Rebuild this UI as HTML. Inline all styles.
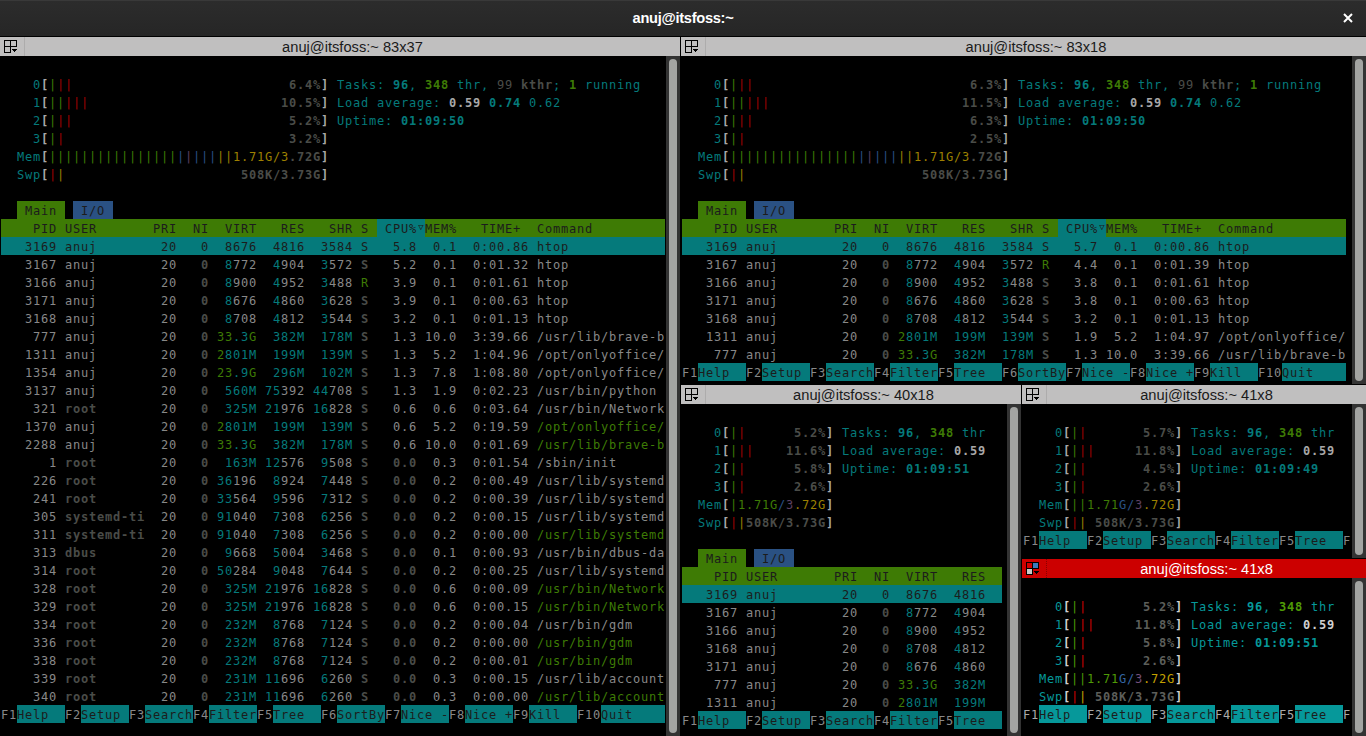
<!DOCTYPE html>
<html lang="en"><head><meta charset="utf-8"><title>anuj@itsfoss:~</title>
<style>
*{margin:0;padding:0;box-sizing:border-box}
html,body{width:1366px;height:736px;overflow:hidden;background:#000}
body{position:relative;font-family:"Liberation Sans","DejaVu Sans",sans-serif}
#tb{position:absolute;left:0;top:0;width:1366px;height:36px;background:linear-gradient(#2c2c2c,#262626);border-top:1px solid #393939}
#tb .t{position:absolute;left:0;width:1366px;top:0;line-height:35px;text-align:center;color:#fff;font-weight:bold;font-size:14.67px;letter-spacing:-0.3px}
#tb svg{position:absolute;left:1343px;top:12px}
.pane{position:absolute;overflow:hidden;background:#000}
.pt{position:absolute;left:0;top:0;right:0;height:19px;background:#c0bfbf;color:#1a1a1a;font-size:14.67px;line-height:20px;text-align:center;overflow:hidden}
.pt .ic{position:absolute;left:4px;top:3px}
.pt .sep{position:absolute;left:24px;top:0;width:1px;height:19px;background:#adacac}
.ptt{position:absolute;left:25px;right:0;top:0;height:19px;text-align:center;white-space:nowrap}
.act .pt{background:#cc0000;color:#fff}
.act .pt .sep{background:transparent;border-left:1px dotted #8a0000}
.term{position:absolute;left:1px;top:20px;right:0;font-family:"DejaVu Sans Mono","Liberation Mono",monospace;font-size:12px;color:var(--fg);
 --fg:#888888;--cy:#057a7b;--gr:#3e7b05;--rd:#a30000;--yl:#9d8000;--bl:#2a5183;--mg:#5e4062;--sh:#4a4c48;--bw:#a8a8a8}
.act .term{--fg:#aaaaaa;--cy:#06989a;--gr:#4e9a06;--rd:#cc0000;--yl:#c4a000;--bl:#3465a4;--mg:#75507b;--sh:#5c5e5a;--bw:#d0d0d0}
.r{position:absolute;left:0;height:18px;line-height:18px;white-space:pre;letter-spacing:calc(8px - 1ch)}
.r span{position:absolute;top:0;height:18px;line-height:20px}
.fg{color:var(--fg)}.cy{color:var(--cy)}.gr{color:var(--gr)}.rd{color:var(--rd)}.yl{color:var(--yl)}.bl{color:var(--bl)}.mg{color:var(--mg)}
.sh{color:var(--sh);font-weight:bold}.nb{font-weight:normal}.r span.tri{font-size:9px;letter-spacing:0;text-align:center;line-height:17px}.bw{color:var(--bw);font-weight:bold}.b{font-weight:bold}.k{color:#1c1c1c}
.bgr{background:var(--gr)}.bcy{background:var(--cy)}.bbl{background:var(--bl)}
.trough{position:absolute;top:19px;width:14px;background:#333333}
.thumb{position:absolute;left:3px;top:3px;bottom:3px;width:8px;border-radius:4px;background:#a3a4a2}
</style></head>
<body>
<div id="tb"><div class="t">anuj@itsfoss:~</div><svg width="10" height="10" viewBox="0 0 10 10"><path d="M1 1l8 8M9 1l-8 8" stroke="#fff" stroke-width="2" fill="none"/></svg></div>
<div class="pane" style="left:0px;top:37px;width:680px;height:699px"><div class="pt"><svg class="ic" width="13" height="13" viewBox="0 0 13 13" shape-rendering="crispEdges"><path d="M.5.5h12v6h-6v6h-6zM6.5.5v6M.5 6.5h6" fill="none" stroke="#000"/><path d="M8 9h5v1h-1v1h-1v1h-1v-1h-1v-1h-1z" fill="#000"/></svg><i class="sep"></i><span class="ptt">anuj@itsfoss:~ 83x37</span></div><div class="term" style="height:680px">
<div class="r" style="top:18px"><span class="cy" style="left:32px">0</span><span class="bw" style="left:40px">[</span><span class="gr" style="left:48px">|</span><span class="rd" style="left:56px">||</span><span class="sh" style="left:288px">6.4%</span><span class="bw" style="left:320px">]</span><span class="cy" style="left:336px">Tasks:</span><span class="cy b" style="left:392px">96</span><span class="cy" style="left:408px">,</span><span class="gr b" style="left:424px">348</span><span class="cy" style="left:456px">thr,</span><span class="sh nb" style="left:496px">99</span><span class="sh" style="left:520px">kthr</span><span class="cy" style="left:552px">;</span><span class="gr b" style="left:568px">1</span><span class="cy" style="left:584px">running</span></div>
<div class="r" style="top:36px"><span class="cy" style="left:32px">1</span><span class="bw" style="left:40px">[</span><span class="gr" style="left:48px">||</span><span class="rd" style="left:64px">|||</span><span class="sh" style="left:280px">10.5%</span><span class="bw" style="left:320px">]</span><span class="cy" style="left:336px">Load average:</span><span class="bw" style="left:448px">0.59</span><span class="cy b" style="left:488px">0.74</span><span class="cy" style="left:528px">0.62</span></div>
<div class="r" style="top:54px"><span class="cy" style="left:32px">2</span><span class="bw" style="left:40px">[</span><span class="gr" style="left:48px">|</span><span class="rd" style="left:56px">||</span><span class="sh" style="left:288px">5.2%</span><span class="bw" style="left:320px">]</span><span class="cy" style="left:336px">Uptime:</span><span class="cy b" style="left:400px">01:09:50</span></div>
<div class="r" style="top:72px"><span class="cy" style="left:32px">3</span><span class="bw" style="left:40px">[</span><span class="gr" style="left:48px">|</span><span class="rd" style="left:56px">|</span><span class="sh" style="left:288px">3.2%</span><span class="bw" style="left:320px">]</span></div>
<div class="r" style="top:90px"><span class="cy" style="left:16px">Mem</span><span class="bw" style="left:40px">[</span><span class="gr" style="left:48px">||||||||||||||||</span><span class="bl" style="left:176px">|</span><span class="mg" style="left:184px">|</span><span class="bl" style="left:192px">|||</span><span class="yl" style="left:216px">||1.71G/3</span><span class="sh" style="left:288px">.72G</span><span class="bw" style="left:320px">]</span></div>
<div class="r" style="top:108px"><span class="cy" style="left:16px">Swp</span><span class="bw" style="left:40px">[</span><span class="rd" style="left:48px">|</span><span class="yl" style="left:56px">|</span><span class="sh" style="left:240px">508K/3.73G</span><span class="bw" style="left:320px">]</span></div>
<div class="r" style="top:144px"><span class="k bgr" style="left:16px;width:48px"> Main </span><span class="k bbl" style="left:72px;width:40px"> I/O </span></div>
<div class="r" style="top:162px"><span class="k bgr" style="left:0px;width:376px">    PID USER       PRI  NI  VIRT   RES   SHR S </span><span class="k bcy" style="left:376px;width:40px"> CPU%</span><span class="k tri bcy" style="left:416px;width:8px">▽</span><span class="k bgr" style="left:424px;width:240px">MEM%   TIME+  Command         </span></div>
<div class="r" style="top:180px"><span class="k bcy" style="left:0px;width:664px">   3169 anuj        20   0  8676  4816  3584 S   5.8  0.1  0:00.86 htop            </span></div>
<div class="r" style="top:198px"><span class="fg" style="left:24px">3167 anuj</span><span class="fg" style="left:160px">20</span><span class="sh" style="left:200px">0</span><span class="cy" style="left:224px">8</span><span class="fg" style="left:232px">772</span><span class="cy" style="left:272px">4</span><span class="fg" style="left:280px">904</span><span class="cy" style="left:320px">3</span><span class="fg" style="left:328px">572</span><span class="sh" style="left:360px">S</span><span class="fg" style="left:392px">5.2</span><span class="fg" style="left:432px">0.1</span><span class="fg" style="left:472px">0:01.32 htop</span></div>
<div class="r" style="top:216px"><span class="fg" style="left:24px">3166 anuj</span><span class="fg" style="left:160px">20</span><span class="sh" style="left:200px">0</span><span class="cy" style="left:224px">8</span><span class="fg" style="left:232px">900</span><span class="cy" style="left:272px">4</span><span class="fg" style="left:280px">952</span><span class="cy" style="left:320px">3</span><span class="fg" style="left:328px">488</span><span class="gr" style="left:360px">R</span><span class="fg" style="left:392px">3.9</span><span class="fg" style="left:432px">0.1</span><span class="fg" style="left:472px">0:01.61 htop</span></div>
<div class="r" style="top:234px"><span class="fg" style="left:24px">3171 anuj</span><span class="fg" style="left:160px">20</span><span class="sh" style="left:200px">0</span><span class="cy" style="left:224px">8</span><span class="fg" style="left:232px">676</span><span class="cy" style="left:272px">4</span><span class="fg" style="left:280px">860</span><span class="cy" style="left:320px">3</span><span class="fg" style="left:328px">628</span><span class="sh" style="left:360px">S</span><span class="fg" style="left:392px">3.9</span><span class="fg" style="left:432px">0.1</span><span class="fg" style="left:472px">0:00.63 htop</span></div>
<div class="r" style="top:252px"><span class="fg" style="left:24px">3168 anuj</span><span class="fg" style="left:160px">20</span><span class="sh" style="left:200px">0</span><span class="cy" style="left:224px">8</span><span class="fg" style="left:232px">708</span><span class="cy" style="left:272px">4</span><span class="fg" style="left:280px">812</span><span class="cy" style="left:320px">3</span><span class="fg" style="left:328px">544</span><span class="sh" style="left:360px">S</span><span class="fg" style="left:392px">3.2</span><span class="fg" style="left:432px">0.1</span><span class="fg" style="left:472px">0:01.13 htop</span></div>
<div class="r" style="top:270px"><span class="fg" style="left:32px">777 anuj</span><span class="fg" style="left:160px">20</span><span class="sh" style="left:200px">0</span><span class="gr" style="left:216px">33</span><span class="cy" style="left:232px">.3</span><span class="gr" style="left:248px">G</span><span class="cy" style="left:272px">382M</span><span class="cy" style="left:320px">178M</span><span class="sh" style="left:360px">S</span><span class="fg" style="left:392px">1.3 10.0</span><span class="fg" style="left:472px">3:39.66 /usr/lib/brave-b</span></div>
<div class="r" style="top:288px"><span class="fg" style="left:24px">1311 anuj</span><span class="fg" style="left:160px">20</span><span class="sh" style="left:200px">0</span><span class="gr" style="left:216px">2</span><span class="cy" style="left:224px">801M</span><span class="cy" style="left:272px">199M</span><span class="cy" style="left:320px">139M</span><span class="sh" style="left:360px">S</span><span class="fg" style="left:392px">1.3</span><span class="fg" style="left:432px">5.2</span><span class="fg" style="left:472px">1:04.96 /opt/onlyoffice/</span></div>
<div class="r" style="top:306px"><span class="fg" style="left:24px">1354 anuj</span><span class="fg" style="left:160px">20</span><span class="sh" style="left:200px">0</span><span class="gr" style="left:216px">23</span><span class="cy" style="left:232px">.9</span><span class="gr" style="left:248px">G</span><span class="cy" style="left:272px">296M</span><span class="cy" style="left:320px">102M</span><span class="sh" style="left:360px">S</span><span class="fg" style="left:392px">1.3</span><span class="fg" style="left:432px">7.8</span><span class="fg" style="left:472px">1:08.80 /opt/onlyoffice/</span></div>
<div class="r" style="top:324px"><span class="fg" style="left:24px">3137 anuj</span><span class="fg" style="left:160px">20</span><span class="sh" style="left:200px">0</span><span class="cy" style="left:224px">560M 75</span><span class="fg" style="left:280px">392</span><span class="cy" style="left:312px">44</span><span class="fg" style="left:328px">708</span><span class="sh" style="left:360px">S</span><span class="fg" style="left:392px">1.3</span><span class="fg" style="left:432px">1.9</span><span class="fg" style="left:472px">0:02.23 /usr/bin/python</span></div>
<div class="r" style="top:342px"><span class="fg" style="left:32px">321</span><span class="sh" style="left:64px">root</span><span class="fg" style="left:160px">20</span><span class="sh" style="left:200px">0</span><span class="cy" style="left:224px">325M 21</span><span class="fg" style="left:280px">976</span><span class="cy" style="left:312px">16</span><span class="fg" style="left:328px">828</span><span class="sh" style="left:360px">S</span><span class="fg" style="left:392px">0.6</span><span class="fg" style="left:432px">0.6</span><span class="fg" style="left:472px">0:03.64 /usr/bin/Network</span></div>
<div class="r" style="top:360px"><span class="fg" style="left:24px">1370 anuj</span><span class="fg" style="left:160px">20</span><span class="sh" style="left:200px">0</span><span class="gr" style="left:216px">2</span><span class="cy" style="left:224px">801M</span><span class="cy" style="left:272px">199M</span><span class="cy" style="left:320px">139M</span><span class="sh" style="left:360px">S</span><span class="fg" style="left:392px">0.6</span><span class="fg" style="left:432px">5.2</span><span class="fg" style="left:472px">0:19.59</span><span class="gr" style="left:536px">/opt/onlyoffice/</span></div>
<div class="r" style="top:378px"><span class="fg" style="left:24px">2288 anuj</span><span class="fg" style="left:160px">20</span><span class="sh" style="left:200px">0</span><span class="gr" style="left:216px">33</span><span class="cy" style="left:232px">.3</span><span class="gr" style="left:248px">G</span><span class="cy" style="left:272px">382M</span><span class="cy" style="left:320px">178M</span><span class="sh" style="left:360px">S</span><span class="fg" style="left:392px">0.6 10.0</span><span class="fg" style="left:472px">0:01.69</span><span class="gr" style="left:536px">/usr/lib/brave-b</span></div>
<div class="r" style="top:396px"><span class="fg" style="left:48px">1</span><span class="sh" style="left:64px">root</span><span class="fg" style="left:160px">20</span><span class="sh" style="left:200px">0</span><span class="cy" style="left:224px">163M 12</span><span class="fg" style="left:280px">576</span><span class="cy" style="left:320px">9</span><span class="fg" style="left:328px">508</span><span class="sh" style="left:360px">S</span><span class="sh" style="left:392px">0.0</span><span class="fg" style="left:432px">0.3</span><span class="fg" style="left:472px">0:01.54 /sbin/init</span></div>
<div class="r" style="top:414px"><span class="fg" style="left:32px">226</span><span class="sh" style="left:64px">root</span><span class="fg" style="left:160px">20</span><span class="sh" style="left:200px">0</span><span class="cy" style="left:216px">36</span><span class="fg" style="left:232px">196</span><span class="cy" style="left:272px">8</span><span class="fg" style="left:280px">924</span><span class="cy" style="left:320px">7</span><span class="fg" style="left:328px">448</span><span class="sh" style="left:360px">S</span><span class="sh" style="left:392px">0.0</span><span class="fg" style="left:432px">0.2</span><span class="fg" style="left:472px">0:00.49 /usr/lib/systemd</span></div>
<div class="r" style="top:432px"><span class="fg" style="left:32px">241</span><span class="sh" style="left:64px">root</span><span class="fg" style="left:160px">20</span><span class="sh" style="left:200px">0</span><span class="cy" style="left:216px">33</span><span class="fg" style="left:232px">564</span><span class="cy" style="left:272px">9</span><span class="fg" style="left:280px">596</span><span class="cy" style="left:320px">7</span><span class="fg" style="left:328px">312</span><span class="sh" style="left:360px">S</span><span class="sh" style="left:392px">0.0</span><span class="fg" style="left:432px">0.2</span><span class="fg" style="left:472px">0:00.39 /usr/lib/systemd</span></div>
<div class="r" style="top:450px"><span class="fg" style="left:32px">305</span><span class="sh" style="left:64px">systemd-ti</span><span class="fg" style="left:160px">20</span><span class="sh" style="left:200px">0</span><span class="cy" style="left:216px">91</span><span class="fg" style="left:232px">040</span><span class="cy" style="left:272px">7</span><span class="fg" style="left:280px">308</span><span class="cy" style="left:320px">6</span><span class="fg" style="left:328px">256</span><span class="sh" style="left:360px">S</span><span class="sh" style="left:392px">0.0</span><span class="fg" style="left:432px">0.2</span><span class="fg" style="left:472px">0:00.15 /usr/lib/systemd</span></div>
<div class="r" style="top:468px"><span class="fg" style="left:32px">311</span><span class="sh" style="left:64px">systemd-ti</span><span class="fg" style="left:160px">20</span><span class="sh" style="left:200px">0</span><span class="cy" style="left:216px">91</span><span class="fg" style="left:232px">040</span><span class="cy" style="left:272px">7</span><span class="fg" style="left:280px">308</span><span class="cy" style="left:320px">6</span><span class="fg" style="left:328px">256</span><span class="sh" style="left:360px">S</span><span class="sh" style="left:392px">0.0</span><span class="fg" style="left:432px">0.2</span><span class="fg" style="left:472px">0:00.00</span><span class="gr" style="left:536px">/usr/lib/systemd</span></div>
<div class="r" style="top:486px"><span class="fg" style="left:32px">313</span><span class="sh" style="left:64px">dbus</span><span class="fg" style="left:160px">20</span><span class="sh" style="left:200px">0</span><span class="cy" style="left:224px">9</span><span class="fg" style="left:232px">668</span><span class="cy" style="left:272px">5</span><span class="fg" style="left:280px">004</span><span class="cy" style="left:320px">3</span><span class="fg" style="left:328px">468</span><span class="sh" style="left:360px">S</span><span class="sh" style="left:392px">0.0</span><span class="fg" style="left:432px">0.1</span><span class="fg" style="left:472px">0:00.93 /usr/bin/dbus-da</span></div>
<div class="r" style="top:504px"><span class="fg" style="left:32px">314</span><span class="sh" style="left:64px">root</span><span class="fg" style="left:160px">20</span><span class="sh" style="left:200px">0</span><span class="cy" style="left:216px">50</span><span class="fg" style="left:232px">284</span><span class="cy" style="left:272px">9</span><span class="fg" style="left:280px">048</span><span class="cy" style="left:320px">7</span><span class="fg" style="left:328px">644</span><span class="sh" style="left:360px">S</span><span class="sh" style="left:392px">0.0</span><span class="fg" style="left:432px">0.2</span><span class="fg" style="left:472px">0:00.25 /usr/lib/systemd</span></div>
<div class="r" style="top:522px"><span class="fg" style="left:32px">328</span><span class="sh" style="left:64px">root</span><span class="fg" style="left:160px">20</span><span class="sh" style="left:200px">0</span><span class="cy" style="left:224px">325M 21</span><span class="fg" style="left:280px">976</span><span class="cy" style="left:312px">16</span><span class="fg" style="left:328px">828</span><span class="sh" style="left:360px">S</span><span class="sh" style="left:392px">0.0</span><span class="fg" style="left:432px">0.6</span><span class="fg" style="left:472px">0:00.09</span><span class="gr" style="left:536px">/usr/bin/Network</span></div>
<div class="r" style="top:540px"><span class="fg" style="left:32px">329</span><span class="sh" style="left:64px">root</span><span class="fg" style="left:160px">20</span><span class="sh" style="left:200px">0</span><span class="cy" style="left:224px">325M 21</span><span class="fg" style="left:280px">976</span><span class="cy" style="left:312px">16</span><span class="fg" style="left:328px">828</span><span class="sh" style="left:360px">S</span><span class="sh" style="left:392px">0.0</span><span class="fg" style="left:432px">0.6</span><span class="fg" style="left:472px">0:00.15</span><span class="gr" style="left:536px">/usr/bin/Network</span></div>
<div class="r" style="top:558px"><span class="fg" style="left:32px">334</span><span class="sh" style="left:64px">root</span><span class="fg" style="left:160px">20</span><span class="sh" style="left:200px">0</span><span class="cy" style="left:224px">232M</span><span class="cy" style="left:272px">8</span><span class="fg" style="left:280px">768</span><span class="cy" style="left:320px">7</span><span class="fg" style="left:328px">124</span><span class="sh" style="left:360px">S</span><span class="sh" style="left:392px">0.0</span><span class="fg" style="left:432px">0.2</span><span class="fg" style="left:472px">0:00.04 /usr/bin/gdm</span></div>
<div class="r" style="top:576px"><span class="fg" style="left:32px">336</span><span class="sh" style="left:64px">root</span><span class="fg" style="left:160px">20</span><span class="sh" style="left:200px">0</span><span class="cy" style="left:224px">232M</span><span class="cy" style="left:272px">8</span><span class="fg" style="left:280px">768</span><span class="cy" style="left:320px">7</span><span class="fg" style="left:328px">124</span><span class="sh" style="left:360px">S</span><span class="sh" style="left:392px">0.0</span><span class="fg" style="left:432px">0.2</span><span class="fg" style="left:472px">0:00.00</span><span class="gr" style="left:536px">/usr/bin/gdm</span></div>
<div class="r" style="top:594px"><span class="fg" style="left:32px">338</span><span class="sh" style="left:64px">root</span><span class="fg" style="left:160px">20</span><span class="sh" style="left:200px">0</span><span class="cy" style="left:224px">232M</span><span class="cy" style="left:272px">8</span><span class="fg" style="left:280px">768</span><span class="cy" style="left:320px">7</span><span class="fg" style="left:328px">124</span><span class="sh" style="left:360px">S</span><span class="sh" style="left:392px">0.0</span><span class="fg" style="left:432px">0.2</span><span class="fg" style="left:472px">0:00.01</span><span class="gr" style="left:536px">/usr/bin/gdm</span></div>
<div class="r" style="top:612px"><span class="fg" style="left:32px">339</span><span class="sh" style="left:64px">root</span><span class="fg" style="left:160px">20</span><span class="sh" style="left:200px">0</span><span class="cy" style="left:224px">231M 11</span><span class="fg" style="left:280px">696</span><span class="cy" style="left:320px">6</span><span class="fg" style="left:328px">260</span><span class="sh" style="left:360px">S</span><span class="sh" style="left:392px">0.0</span><span class="fg" style="left:432px">0.3</span><span class="fg" style="left:472px">0:00.15 /usr/lib/account</span></div>
<div class="r" style="top:630px"><span class="fg" style="left:32px">340</span><span class="sh" style="left:64px">root</span><span class="fg" style="left:160px">20</span><span class="sh" style="left:200px">0</span><span class="cy" style="left:224px">231M 11</span><span class="fg" style="left:280px">696</span><span class="cy" style="left:320px">6</span><span class="fg" style="left:328px">260</span><span class="sh" style="left:360px">S</span><span class="sh" style="left:392px">0.0</span><span class="fg" style="left:432px">0.3</span><span class="fg" style="left:472px">0:00.00</span><span class="gr" style="left:536px">/usr/lib/account</span></div>
<div class="r" style="top:648px"><span class="fg" style="left:0px">F1</span><span class="k bcy" style="left:16px;width:48px">Help  </span><span class="fg" style="left:64px">F2</span><span class="k bcy" style="left:80px;width:48px">Setup </span><span class="fg" style="left:128px">F3</span><span class="k bcy" style="left:144px;width:48px">Search</span><span class="fg" style="left:192px">F4</span><span class="k bcy" style="left:208px;width:48px">Filter</span><span class="fg" style="left:256px">F5</span><span class="k bcy" style="left:272px;width:48px">Tree  </span><span class="fg" style="left:320px">F6</span><span class="k bcy" style="left:336px;width:48px">SortBy</span><span class="fg" style="left:384px">F7</span><span class="k bcy" style="left:400px;width:48px">Nice -</span><span class="fg" style="left:448px">F8</span><span class="k bcy" style="left:464px;width:48px">Nice +</span><span class="fg" style="left:512px">F9</span><span class="k bcy" style="left:528px;width:48px">Kill  </span><span class="fg" style="left:576px">F10</span><span class="k bcy" style="left:600px;width:48px">Quit  </span><span class="bcy" style="left:648px;width:16px">  </span></div>
</div><div class="trough" style="left:666px;height:680px"><div class="thumb"></div></div></div>
<div class="pane" style="left:681px;top:37px;width:685px;height:347px"><div class="pt"><svg class="ic" width="13" height="13" viewBox="0 0 13 13" shape-rendering="crispEdges"><path d="M.5.5h12v6h-6v6h-6zM6.5.5v6M.5 6.5h6" fill="none" stroke="#000"/><path d="M8 9h5v1h-1v1h-1v1h-1v-1h-1v-1h-1z" fill="#000"/></svg><i class="sep"></i><span class="ptt">anuj@itsfoss:~ 83x18</span></div><div class="term" style="height:328px">
<div class="r" style="top:18px"><span class="cy" style="left:32px">0</span><span class="bw" style="left:40px">[</span><span class="gr" style="left:48px">|</span><span class="rd" style="left:56px">||</span><span class="sh" style="left:288px">6.3%</span><span class="bw" style="left:320px">]</span><span class="cy" style="left:336px">Tasks:</span><span class="cy b" style="left:392px">96</span><span class="cy" style="left:408px">,</span><span class="gr b" style="left:424px">348</span><span class="cy" style="left:456px">thr,</span><span class="sh nb" style="left:496px">99</span><span class="sh" style="left:520px">kthr</span><span class="cy" style="left:552px">;</span><span class="gr b" style="left:568px">1</span><span class="cy" style="left:584px">running</span></div>
<div class="r" style="top:36px"><span class="cy" style="left:32px">1</span><span class="bw" style="left:40px">[</span><span class="gr" style="left:48px">||</span><span class="rd" style="left:64px">|||</span><span class="sh" style="left:280px">11.5%</span><span class="bw" style="left:320px">]</span><span class="cy" style="left:336px">Load average:</span><span class="bw" style="left:448px">0.59</span><span class="cy b" style="left:488px">0.74</span><span class="cy" style="left:528px">0.62</span></div>
<div class="r" style="top:54px"><span class="cy" style="left:32px">2</span><span class="bw" style="left:40px">[</span><span class="gr" style="left:48px">|</span><span class="rd" style="left:56px">||</span><span class="sh" style="left:288px">6.3%</span><span class="bw" style="left:320px">]</span><span class="cy" style="left:336px">Uptime:</span><span class="cy b" style="left:400px">01:09:50</span></div>
<div class="r" style="top:72px"><span class="cy" style="left:32px">3</span><span class="bw" style="left:40px">[</span><span class="gr" style="left:48px">|</span><span class="rd" style="left:56px">|</span><span class="sh" style="left:288px">2.5%</span><span class="bw" style="left:320px">]</span></div>
<div class="r" style="top:90px"><span class="cy" style="left:16px">Mem</span><span class="bw" style="left:40px">[</span><span class="gr" style="left:48px">||||||||||||||||</span><span class="bl" style="left:176px">|</span><span class="mg" style="left:184px">|</span><span class="bl" style="left:192px">|||</span><span class="yl" style="left:216px">||1.71G/3</span><span class="sh" style="left:288px">.72G</span><span class="bw" style="left:320px">]</span></div>
<div class="r" style="top:108px"><span class="cy" style="left:16px">Swp</span><span class="bw" style="left:40px">[</span><span class="rd" style="left:48px">|</span><span class="yl" style="left:56px">|</span><span class="sh" style="left:240px">508K/3.73G</span><span class="bw" style="left:320px">]</span></div>
<div class="r" style="top:144px"><span class="k bgr" style="left:16px;width:48px"> Main </span><span class="k bbl" style="left:72px;width:40px"> I/O </span></div>
<div class="r" style="top:162px"><span class="k bgr" style="left:0px;width:376px">    PID USER       PRI  NI  VIRT   RES   SHR S </span><span class="k bcy" style="left:376px;width:40px"> CPU%</span><span class="k tri bcy" style="left:416px;width:8px">▽</span><span class="k bgr" style="left:424px;width:240px">MEM%   TIME+  Command         </span></div>
<div class="r" style="top:180px"><span class="k bcy" style="left:0px;width:664px">   3169 anuj        20   0  8676  4816  3584 S   5.7  0.1  0:00.86 htop            </span></div>
<div class="r" style="top:198px"><span class="fg" style="left:24px">3167 anuj</span><span class="fg" style="left:160px">20</span><span class="sh" style="left:200px">0</span><span class="cy" style="left:224px">8</span><span class="fg" style="left:232px">772</span><span class="cy" style="left:272px">4</span><span class="fg" style="left:280px">904</span><span class="cy" style="left:320px">3</span><span class="fg" style="left:328px">572</span><span class="gr" style="left:360px">R</span><span class="fg" style="left:392px">4.4</span><span class="fg" style="left:432px">0.1</span><span class="fg" style="left:472px">0:01.39 htop</span></div>
<div class="r" style="top:216px"><span class="fg" style="left:24px">3166 anuj</span><span class="fg" style="left:160px">20</span><span class="sh" style="left:200px">0</span><span class="cy" style="left:224px">8</span><span class="fg" style="left:232px">900</span><span class="cy" style="left:272px">4</span><span class="fg" style="left:280px">952</span><span class="cy" style="left:320px">3</span><span class="fg" style="left:328px">488</span><span class="sh" style="left:360px">S</span><span class="fg" style="left:392px">3.8</span><span class="fg" style="left:432px">0.1</span><span class="fg" style="left:472px">0:01.61 htop</span></div>
<div class="r" style="top:234px"><span class="fg" style="left:24px">3171 anuj</span><span class="fg" style="left:160px">20</span><span class="sh" style="left:200px">0</span><span class="cy" style="left:224px">8</span><span class="fg" style="left:232px">676</span><span class="cy" style="left:272px">4</span><span class="fg" style="left:280px">860</span><span class="cy" style="left:320px">3</span><span class="fg" style="left:328px">628</span><span class="sh" style="left:360px">S</span><span class="fg" style="left:392px">3.8</span><span class="fg" style="left:432px">0.1</span><span class="fg" style="left:472px">0:00.63 htop</span></div>
<div class="r" style="top:252px"><span class="fg" style="left:24px">3168 anuj</span><span class="fg" style="left:160px">20</span><span class="sh" style="left:200px">0</span><span class="cy" style="left:224px">8</span><span class="fg" style="left:232px">708</span><span class="cy" style="left:272px">4</span><span class="fg" style="left:280px">812</span><span class="cy" style="left:320px">3</span><span class="fg" style="left:328px">544</span><span class="sh" style="left:360px">S</span><span class="fg" style="left:392px">3.2</span><span class="fg" style="left:432px">0.1</span><span class="fg" style="left:472px">0:01.13 htop</span></div>
<div class="r" style="top:270px"><span class="fg" style="left:24px">1311 anuj</span><span class="fg" style="left:160px">20</span><span class="sh" style="left:200px">0</span><span class="gr" style="left:216px">2</span><span class="cy" style="left:224px">801M</span><span class="cy" style="left:272px">199M</span><span class="cy" style="left:320px">139M</span><span class="sh" style="left:360px">S</span><span class="fg" style="left:392px">1.9</span><span class="fg" style="left:432px">5.2</span><span class="fg" style="left:472px">1:04.97 /opt/onlyoffice/</span></div>
<div class="r" style="top:288px"><span class="fg" style="left:32px">777 anuj</span><span class="fg" style="left:160px">20</span><span class="sh" style="left:200px">0</span><span class="gr" style="left:216px">33</span><span class="cy" style="left:232px">.3</span><span class="gr" style="left:248px">G</span><span class="cy" style="left:272px">382M</span><span class="cy" style="left:320px">178M</span><span class="sh" style="left:360px">S</span><span class="fg" style="left:392px">1.3 10.0</span><span class="fg" style="left:472px">3:39.66 /usr/lib/brave-b</span></div>
<div class="r" style="top:306px"><span class="fg" style="left:0px">F1</span><span class="k bcy" style="left:16px;width:48px">Help  </span><span class="fg" style="left:64px">F2</span><span class="k bcy" style="left:80px;width:48px">Setup </span><span class="fg" style="left:128px">F3</span><span class="k bcy" style="left:144px;width:48px">Search</span><span class="fg" style="left:192px">F4</span><span class="k bcy" style="left:208px;width:48px">Filter</span><span class="fg" style="left:256px">F5</span><span class="k bcy" style="left:272px;width:48px">Tree  </span><span class="fg" style="left:320px">F6</span><span class="k bcy" style="left:336px;width:48px">SortBy</span><span class="fg" style="left:384px">F7</span><span class="k bcy" style="left:400px;width:48px">Nice -</span><span class="fg" style="left:448px">F8</span><span class="k bcy" style="left:464px;width:48px">Nice +</span><span class="fg" style="left:512px">F9</span><span class="k bcy" style="left:528px;width:48px">Kill  </span><span class="fg" style="left:576px">F10</span><span class="k bcy" style="left:600px;width:48px">Quit  </span><span class="bcy" style="left:648px;width:16px">  </span></div>
</div><div class="trough" style="left:671px;height:328px"><div class="thumb"></div></div></div>
<div class="pane" style="left:681px;top:385px;width:340px;height:351px"><div class="pt"><svg class="ic" width="13" height="13" viewBox="0 0 13 13" shape-rendering="crispEdges"><path d="M.5.5h12v6h-6v6h-6zM6.5.5v6M.5 6.5h6" fill="none" stroke="#000"/><path d="M8 9h5v1h-1v1h-1v1h-1v-1h-1v-1h-1z" fill="#000"/></svg><i class="sep"></i><span class="ptt">anuj@itsfoss:~ 40x18</span></div><div class="term" style="height:332px">
<div class="r" style="top:18px"><span class="cy" style="left:32px">0</span><span class="bw" style="left:40px">[</span><span class="gr" style="left:48px">|</span><span class="rd" style="left:56px">|</span><span class="sh" style="left:112px">5.2%</span><span class="bw" style="left:144px">]</span><span class="cy" style="left:160px">Tasks:</span><span class="cy b" style="left:216px">96</span><span class="cy" style="left:232px">,</span><span class="gr b" style="left:248px">348</span><span class="cy" style="left:280px">thr</span></div>
<div class="r" style="top:36px"><span class="cy" style="left:32px">1</span><span class="bw" style="left:40px">[</span><span class="gr" style="left:48px">|</span><span class="rd" style="left:56px">||</span><span class="sh" style="left:104px">11.6%</span><span class="bw" style="left:144px">]</span><span class="cy" style="left:160px">Load average:</span><span class="bw" style="left:272px">0.59</span></div>
<div class="r" style="top:54px"><span class="cy" style="left:32px">2</span><span class="bw" style="left:40px">[</span><span class="gr" style="left:48px">|</span><span class="rd" style="left:56px">|</span><span class="sh" style="left:112px">5.8%</span><span class="bw" style="left:144px">]</span><span class="cy" style="left:160px">Uptime:</span><span class="cy b" style="left:224px">01:09:51</span></div>
<div class="r" style="top:72px"><span class="cy" style="left:32px">3</span><span class="bw" style="left:40px">[</span><span class="gr" style="left:48px">|</span><span class="rd" style="left:56px">|</span><span class="sh" style="left:112px">2.6%</span><span class="bw" style="left:144px">]</span></div>
<div class="r" style="top:90px"><span class="cy" style="left:16px">Mem</span><span class="bw" style="left:40px">[</span><span class="gr" style="left:48px">|1.71G</span><span class="bl" style="left:96px">/</span><span class="mg" style="left:104px">3</span><span class="yl" style="left:112px">.72G</span><span class="bw" style="left:144px">]</span></div>
<div class="r" style="top:108px"><span class="cy" style="left:16px">Swp</span><span class="bw" style="left:40px">[</span><span class="rd" style="left:48px">|</span><span class="yl" style="left:56px">|</span><span class="sh" style="left:64px">508K/3.73G</span><span class="bw" style="left:144px">]</span></div>
<div class="r" style="top:144px"><span class="k bgr" style="left:16px;width:48px"> Main </span><span class="k bbl" style="left:72px;width:40px"> I/O </span></div>
<div class="r" style="top:162px"><span class="k bgr" style="left:0px;width:320px">    PID USER       PRI  NI  VIRT   RES  </span></div>
<div class="r" style="top:180px"><span class="k bcy" style="left:0px;width:320px">   3169 anuj        20   0  8676  4816  </span></div>
<div class="r" style="top:198px"><span class="fg" style="left:24px">3167 anuj</span><span class="fg" style="left:160px">20</span><span class="sh" style="left:200px">0</span><span class="cy" style="left:224px">8</span><span class="fg" style="left:232px">772</span><span class="cy" style="left:272px">4</span><span class="fg" style="left:280px">904</span></div>
<div class="r" style="top:216px"><span class="fg" style="left:24px">3166 anuj</span><span class="fg" style="left:160px">20</span><span class="sh" style="left:200px">0</span><span class="cy" style="left:224px">8</span><span class="fg" style="left:232px">900</span><span class="cy" style="left:272px">4</span><span class="fg" style="left:280px">952</span></div>
<div class="r" style="top:234px"><span class="fg" style="left:24px">3168 anuj</span><span class="fg" style="left:160px">20</span><span class="sh" style="left:200px">0</span><span class="cy" style="left:224px">8</span><span class="fg" style="left:232px">708</span><span class="cy" style="left:272px">4</span><span class="fg" style="left:280px">812</span></div>
<div class="r" style="top:252px"><span class="fg" style="left:24px">3171 anuj</span><span class="fg" style="left:160px">20</span><span class="sh" style="left:200px">0</span><span class="cy" style="left:224px">8</span><span class="fg" style="left:232px">676</span><span class="cy" style="left:272px">4</span><span class="fg" style="left:280px">860</span></div>
<div class="r" style="top:270px"><span class="fg" style="left:32px">777 anuj</span><span class="fg" style="left:160px">20</span><span class="sh" style="left:200px">0</span><span class="gr" style="left:216px">33</span><span class="cy" style="left:232px">.3</span><span class="gr" style="left:248px">G</span><span class="cy" style="left:272px">382M</span></div>
<div class="r" style="top:288px"><span class="fg" style="left:24px">1311 anuj</span><span class="fg" style="left:160px">20</span><span class="sh" style="left:200px">0</span><span class="gr" style="left:216px">2</span><span class="cy" style="left:224px">801M</span><span class="cy" style="left:272px">199M</span></div>
<div class="r" style="top:306px"><span class="fg" style="left:0px">F1</span><span class="k bcy" style="left:16px;width:48px">Help  </span><span class="fg" style="left:64px">F2</span><span class="k bcy" style="left:80px;width:48px">Setup </span><span class="fg" style="left:128px">F3</span><span class="k bcy" style="left:144px;width:48px">Search</span><span class="fg" style="left:192px">F4</span><span class="k bcy" style="left:208px;width:48px">Filter</span><span class="fg" style="left:256px">F5</span><span class="k bcy" style="left:272px;width:48px">Tree  </span></div>
</div><div class="trough" style="left:326px;height:332px"><div class="thumb"></div></div></div>
<div class="pane" style="left:1022px;top:385px;width:344px;height:173px"><div class="pt"><svg class="ic" width="13" height="13" viewBox="0 0 13 13" shape-rendering="crispEdges"><path d="M.5.5h12v6h-6v6h-6zM6.5.5v6M.5 6.5h6" fill="none" stroke="#000"/><path d="M8 9h5v1h-1v1h-1v1h-1v-1h-1v-1h-1z" fill="#000"/></svg><i class="sep"></i><span class="ptt">anuj@itsfoss:~ 41x8</span></div><div class="term" style="height:154px">
<div class="r" style="top:18px"><span class="cy" style="left:32px">0</span><span class="bw" style="left:40px">[</span><span class="gr" style="left:48px">|</span><span class="rd" style="left:56px">|</span><span class="sh" style="left:120px">5.7%</span><span class="bw" style="left:152px">]</span><span class="cy" style="left:168px">Tasks:</span><span class="cy b" style="left:224px">96</span><span class="cy" style="left:240px">,</span><span class="gr b" style="left:256px">348</span><span class="cy" style="left:288px">thr</span></div>
<div class="r" style="top:36px"><span class="cy" style="left:32px">1</span><span class="bw" style="left:40px">[</span><span class="gr" style="left:48px">|</span><span class="rd" style="left:56px">||</span><span class="sh" style="left:112px">11.8%</span><span class="bw" style="left:152px">]</span><span class="cy" style="left:168px">Load average:</span><span class="bw" style="left:280px">0.59</span></div>
<div class="r" style="top:54px"><span class="cy" style="left:32px">2</span><span class="bw" style="left:40px">[</span><span class="gr" style="left:48px">|</span><span class="rd" style="left:56px">|</span><span class="sh" style="left:120px">4.5%</span><span class="bw" style="left:152px">]</span><span class="cy" style="left:168px">Uptime:</span><span class="cy b" style="left:232px">01:09:49</span></div>
<div class="r" style="top:72px"><span class="cy" style="left:32px">3</span><span class="bw" style="left:40px">[</span><span class="gr" style="left:48px">|</span><span class="rd" style="left:56px">|</span><span class="sh" style="left:120px">2.6%</span><span class="bw" style="left:152px">]</span></div>
<div class="r" style="top:90px"><span class="cy" style="left:16px">Mem</span><span class="bw" style="left:40px">[</span><span class="gr" style="left:48px">||1.71</span><span class="bl" style="left:96px">G/</span><span class="mg" style="left:112px">3</span><span class="yl" style="left:120px">.72G</span><span class="bw" style="left:152px">]</span></div>
<div class="r" style="top:108px"><span class="cy" style="left:16px">Swp</span><span class="bw" style="left:40px">[</span><span class="rd" style="left:48px">|</span><span class="yl" style="left:56px">|</span><span class="sh" style="left:72px">508K/3.73G</span><span class="bw" style="left:152px">]</span></div>
<div class="r" style="top:126px"><span class="fg" style="left:0px">F1</span><span class="k bcy" style="left:16px;width:48px">Help  </span><span class="fg" style="left:64px">F2</span><span class="k bcy" style="left:80px;width:48px">Setup </span><span class="fg" style="left:128px">F3</span><span class="k bcy" style="left:144px;width:48px">Search</span><span class="fg" style="left:192px">F4</span><span class="k bcy" style="left:208px;width:48px">Filter</span><span class="fg" style="left:256px">F5</span><span class="k bcy" style="left:272px;width:48px">Tree  </span><span class="fg" style="left:320px">F</span></div>
</div><div class="trough" style="left:330px;height:154px"><div class="thumb"></div></div></div>
<div class="pane act" style="left:1022px;top:559px;width:344px;height:177px"><div class="pt"><svg class="ic" width="13" height="13" viewBox="0 0 13 13" shape-rendering="crispEdges"><rect x="1" y="1" width="5" height="5" fill="#d40000"/><rect x="7" y="1" width="5" height="5" fill="#3a7abf"/><rect x="1" y="7" width="5" height="5" fill="#c8c8c8"/><path d="M.5.5h12v6h-6v6h-6zM6.5.5v6M.5 6.5h6" fill="none" stroke="#000"/><path d="M8 9h5v1h-1v1h-1v1h-1v-1h-1v-1h-1z" fill="#000"/></svg><i class="sep"></i><span class="ptt">anuj@itsfoss:~ 41x8</span></div><div class="term" style="height:158px">
<div class="r" style="top:18px"><span class="cy" style="left:32px">0</span><span class="bw" style="left:40px">[</span><span class="gr" style="left:48px">|</span><span class="rd" style="left:56px">|</span><span class="sh" style="left:120px">5.2%</span><span class="bw" style="left:152px">]</span><span class="cy" style="left:168px">Tasks:</span><span class="cy b" style="left:224px">96</span><span class="cy" style="left:240px">,</span><span class="gr b" style="left:256px">348</span><span class="cy" style="left:288px">thr</span></div>
<div class="r" style="top:36px"><span class="cy" style="left:32px">1</span><span class="bw" style="left:40px">[</span><span class="gr" style="left:48px">|</span><span class="rd" style="left:56px">||</span><span class="sh" style="left:112px">11.8%</span><span class="bw" style="left:152px">]</span><span class="cy" style="left:168px">Load average:</span><span class="bw" style="left:280px">0.59</span></div>
<div class="r" style="top:54px"><span class="cy" style="left:32px">2</span><span class="bw" style="left:40px">[</span><span class="gr" style="left:48px">|</span><span class="rd" style="left:56px">|</span><span class="sh" style="left:120px">5.8%</span><span class="bw" style="left:152px">]</span><span class="cy" style="left:168px">Uptime:</span><span class="cy b" style="left:232px">01:09:51</span></div>
<div class="r" style="top:72px"><span class="cy" style="left:32px">3</span><span class="bw" style="left:40px">[</span><span class="gr" style="left:48px">|</span><span class="rd" style="left:56px">|</span><span class="sh" style="left:120px">2.6%</span><span class="bw" style="left:152px">]</span></div>
<div class="r" style="top:90px"><span class="cy" style="left:16px">Mem</span><span class="bw" style="left:40px">[</span><span class="gr" style="left:48px">||1.71</span><span class="bl" style="left:96px">G/</span><span class="mg" style="left:112px">3</span><span class="yl" style="left:120px">.72G</span><span class="bw" style="left:152px">]</span></div>
<div class="r" style="top:108px"><span class="cy" style="left:16px">Swp</span><span class="bw" style="left:40px">[</span><span class="rd" style="left:48px">|</span><span class="yl" style="left:56px">|</span><span class="sh" style="left:72px">508K/3.73G</span><span class="bw" style="left:152px">]</span></div>
<div class="r" style="top:126px"><span class="fg" style="left:0px">F1</span><span class="k bcy" style="left:16px;width:48px">Help  </span><span class="fg" style="left:64px">F2</span><span class="k bcy" style="left:80px;width:48px">Setup </span><span class="fg" style="left:128px">F3</span><span class="k bcy" style="left:144px;width:48px">Search</span><span class="fg" style="left:192px">F4</span><span class="k bcy" style="left:208px;width:48px">Filter</span><span class="fg" style="left:256px">F5</span><span class="k bcy" style="left:272px;width:48px">Tree  </span><span class="fg" style="left:320px">F</span></div>
</div><div class="trough" style="left:330px;height:158px"><div class="thumb"></div></div></div>
</body></html>
